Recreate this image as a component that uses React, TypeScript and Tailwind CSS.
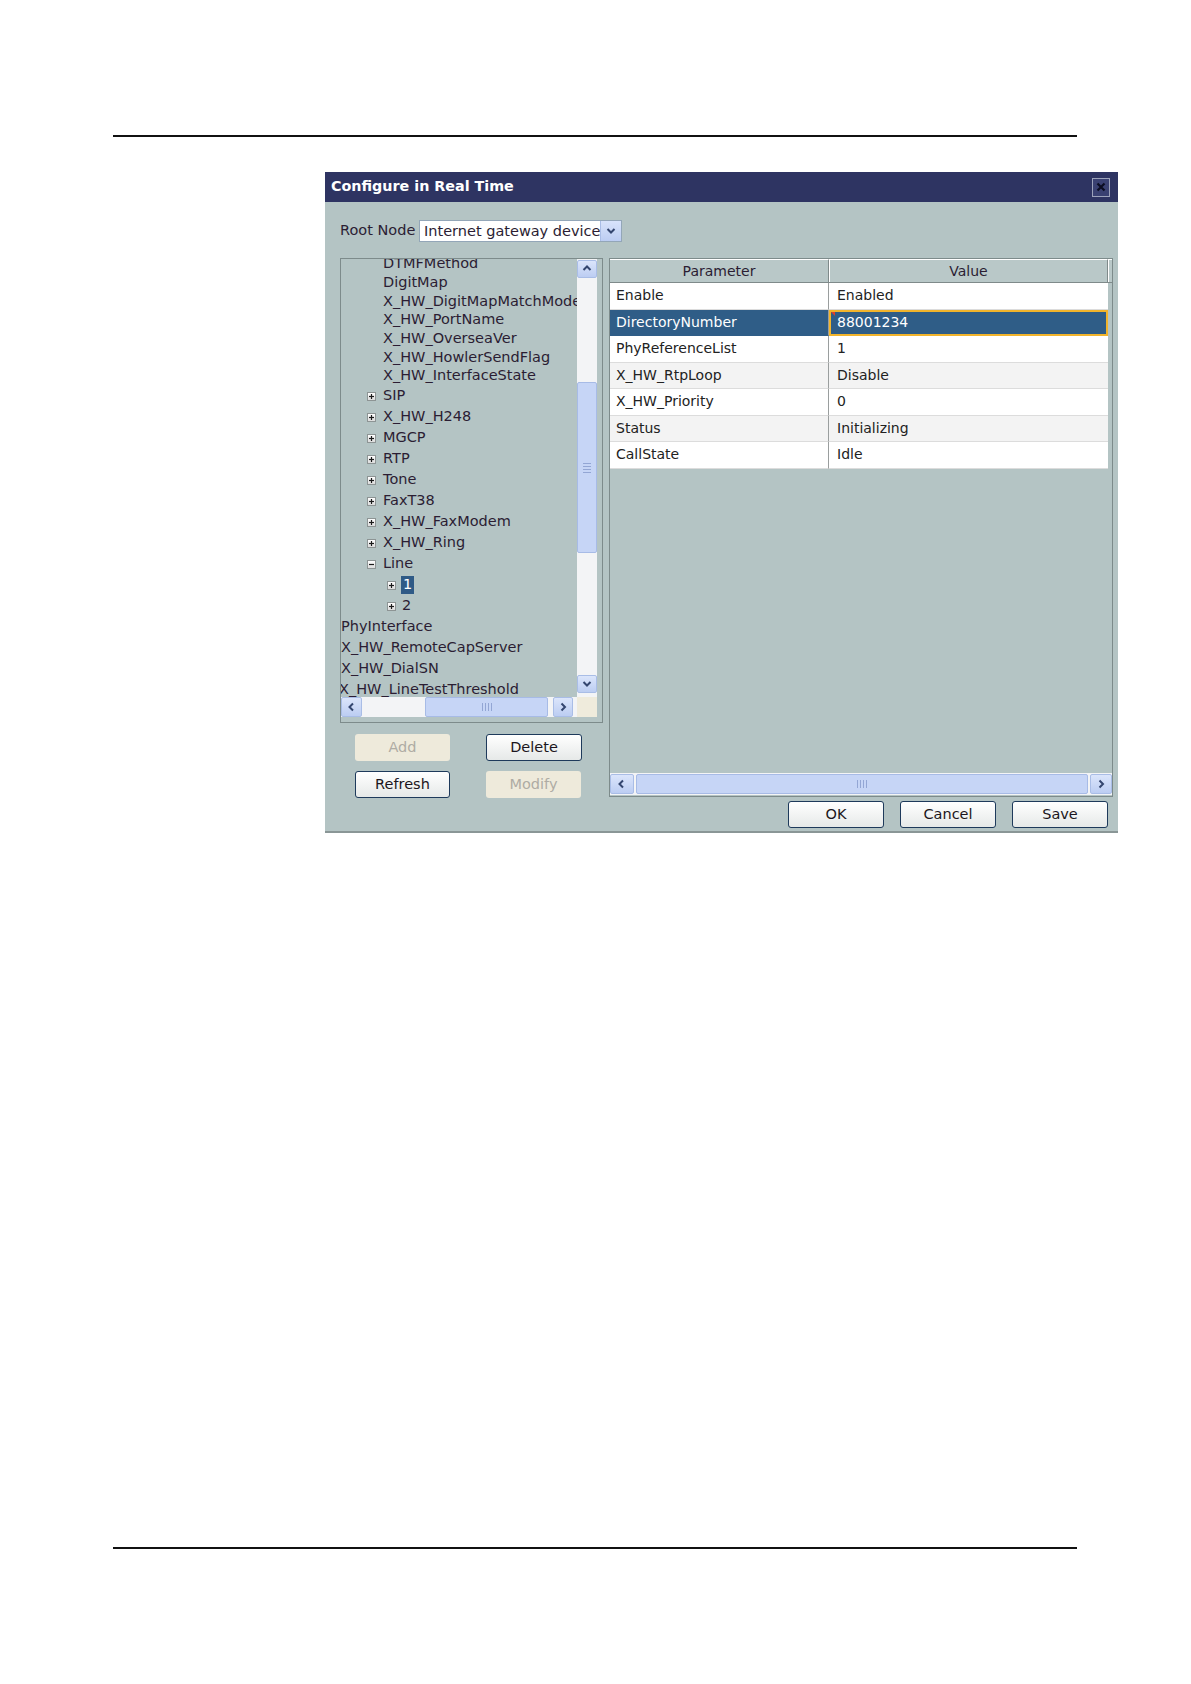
const treeText = 'text-[#2b1d33]'

type Row = { param: string; value: string; shade?: boolean; selected?: boolean }

const rows: Row[] = [
  { param: 'Enable', value: 'Enabled' },
  { param: 'DirectoryNumber', value: '88001234', selected: true },
  { param: 'PhyReferenceList', value: '1' },
  { param: 'X_HW_RtpLoop', value: 'Disable', shade: true },
  { param: 'X_HW_Priority', value: '0' },
  { param: 'Status', value: 'Initializing', shade: true },
  { param: 'CallState', value: 'Idle' },
]

const leaves = [
  'DTMFMethod',
  'DigitMap',
  'X_HW_DigitMapMatchMode',
  'X_HW_PortName',
  'X_HW_OverseaVer',
  'X_HW_HowlerSendFlag',
  'X_HW_InterfaceState',
]

const branches = ['SIP', 'X_HW_H248', 'MGCP', 'RTP', 'Tone', 'FaxT38', 'X_HW_FaxModem', 'X_HW_Ring']

const topLevel = ['PhyInterface', 'X_HW_RemoteCapServer', 'X_HW_DialSN', 'X_HW_LineTestThreshold']

function Chevron({ dir }: { dir: 'up' | 'down' | 'left' | 'right' }) {
  const d = {
    up: 'M1.5 6 L5 2.5 L8.5 6',
    down: 'M1.5 3 L5 6.5 L8.5 3',
    left: 'M6 1.5 L2.5 5 L6 8.5',
    right: 'M3.5 1.5 L7 5 L3.5 8.5',
  }[dir]
  return (
    <svg width="10" height="10" viewBox="0 0 10 10">
      <path d={d} stroke="#34466f" strokeWidth="2" fill="none" />
    </svg>
  )
}

function ArrowButton({ dir, className }: { dir: 'up' | 'down' | 'left' | 'right'; className: string }) {
  return (
    <div
      className={`flex items-center justify-center rounded-[2px] border border-[#a9bde6] bg-gradient-to-b from-[#dbe5fb] to-[#bccdf2] ${className}`}
    >
      <Chevron dir={dir} />
    </div>
  )
}

function Grip({ vertical }: { vertical?: boolean }) {
  const line = vertical ? 'h-px w-[8px] bg-[#93a6d4]' : 'h-[8px] w-px bg-[#93a6d4]'
  return (
    <div className={`flex gap-[2px] ${vertical ? 'flex-col' : ''}`}>
      <span className={line} />
      <span className={line} />
      <span className={line} />
      <span className={line} />
    </div>
  )
}

function Expander({ open }: { open?: boolean }) {
  return (
    <span className="flex h-[9px] w-[9px] items-center justify-center border border-[#8d9494] bg-gradient-to-b from-white to-[#dcdcdc]">
      <svg width="7" height="7" viewBox="0 0 7 7">
        <path d="M1 3.5 H6" stroke="#1b1b1b" strokeWidth="1.2" />
        {open ? null : <path d="M3.5 1 V6" stroke="#1b1b1b" strokeWidth="1.2" />}
      </svg>
    </span>
  )
}

function DialogButton({ label, disabled, w }: { label: string; disabled?: boolean; w: string }) {
  return disabled ? (
    <div
      className={`flex h-[27px] ${w} items-center justify-center rounded-[3px] bg-[#eeeadb] text-[14.5px] text-[#aeaca4]`}
    >
      {label}
    </div>
  ) : (
    <div
      className={`flex h-[27px] ${w} items-center justify-center rounded-[3px] border border-[#1e3a5b] bg-gradient-to-b from-white to-[#e6e9e8] text-[14.5px] text-[#1c1620]`}
    >
      {label}
    </div>
  )
}

function Tree() {
  return (
    <div className={`-mt-[4px] text-[14.5px] ${treeText}`}>
      {leaves.map((name) => (
        <div key={name} className="relative flex h-[18.67px] items-center whitespace-nowrap">
          <span className="absolute left-[42px]">{name}</span>
        </div>
      ))}
      {branches.map((name) => (
        <div key={name} className="relative flex h-[21px] items-center whitespace-nowrap">
          <span className="absolute left-[26px]">
            <Expander />
          </span>
          <span className="absolute left-[42px]">{name}</span>
        </div>
      ))}
      <div className="relative flex h-[21px] items-center whitespace-nowrap">
        <span className="absolute left-[26px]">
          <Expander open />
        </span>
        <span className="absolute left-[42px]">Line</span>
      </div>
      <div className="relative flex h-[21px] items-center whitespace-nowrap">
        <span className="absolute left-[46px]">
          <Expander />
        </span>
        <span className="absolute left-[60px] flex h-[18px] w-[13px] items-center justify-center bg-[#2f5a86] text-white">
          1
        </span>
      </div>
      <div className="relative flex h-[21px] items-center whitespace-nowrap">
        <span className="absolute left-[46px]">
          <Expander />
        </span>
        <span className="absolute left-[61px]">2</span>
      </div>
      {topLevel.map((name, i) => (
        <div key={name} className="relative flex h-[21px] items-center whitespace-nowrap">
          <span className={`absolute ${i === 3 ? '-left-[2px]' : 'left-0'}`}>{name}</span>
        </div>
      ))}
    </div>
  )
}

export default function App() {
  return (
    <div className="h-[1684px] w-[1191px] bg-white font-['DejaVu_Sans',sans-serif]">
      <div className="pt-[135px]">
        <div className="ml-[113px] h-[2px] w-[964px] bg-[#111]" />

        {/* dialog */}
        <div className="ml-[325px] mt-[35px] flex h-[661px] w-[793px] flex-col border-b-2 border-[#8a9696] bg-[#b4c4c4]">
          <div className="flex h-[30px] shrink-0 items-center justify-between bg-[#2e3462] pl-[6px] pr-[8px]">
            <span className="text-[14.3px] font-bold text-white">Configure in Real Time</span>
            <span className="flex h-[19px] w-[18px] items-center justify-center border border-[#9da3bb] bg-[#3a4172]">
              <svg width="10" height="10" viewBox="0 0 10 10">
                <path d="M1.5 1.5 L8.5 8.5 M8.5 1.5 L1.5 8.5" stroke="#0b0d22" strokeWidth="2.2" />
              </svg>
            </span>
          </div>

          <div className="pl-[15px] pr-px">
            {/* root node */}
            <div className="mt-[18px] flex h-[22px] items-center">
              <span className="w-[79px] text-[14.5px] text-[#2b1d33]">Root Node</span>
              <div className="flex h-[22px] w-[203px] border border-[#93a6b8] bg-white">
                <span className="min-w-0 flex-1 overflow-hidden whitespace-nowrap pl-[4px] text-[14.5px] leading-[20px] text-[#2b1d33]">
                  Internet gateway device
                </span>
                <span className="flex w-[21px] shrink-0 items-center justify-center border-l border-[#a9bde6] bg-gradient-to-b from-[#d8e3fb] to-[#bccdf2]">
                  <Chevron dir="down" />
                </span>
              </div>
            </div>

            <div className="mt-[16px] flex gap-[6px]">
              {/* left column */}
              <div className="w-[263px] shrink-0">
                <div className="h-[465px] border border-[#7d8b8b] pb-[5px] pr-[5px]">
                  <div className="flex h-full flex-col">
                    <div className="flex min-h-0 flex-1">
                      <div className="relative flex-1 overflow-hidden">
                        <Tree />
                      </div>
                      <div className="flex w-[20px] flex-col bg-[#f3f4f6] pt-px">
                        <ArrowButton dir="up" className="h-[18px]" />
                        <div className="h-[104px]" />
                        <div className="flex h-[171px] items-center justify-center rounded-[2px] border border-[#a7bbe6] bg-[#c6d5f6]">
                          <Grip vertical />
                        </div>
                        <div className="flex-1" />
                        <ArrowButton dir="down" className="mb-[4px] h-[18px]" />
                      </div>
                    </div>
                    <div className="flex h-[20px]">
                      <div className="flex flex-1 bg-[#f3f4f6] pr-[4px]">
                        <ArrowButton dir="left" className="w-[21px]" />
                        <div className="w-[63px]" />
                        <div className="flex w-[123px] items-center justify-center rounded-[2px] border border-[#a7bbe6] bg-[#c6d5f6]">
                          <Grip />
                        </div>
                        <div className="flex-1" />
                        <ArrowButton dir="right" className="w-[20px]" />
                      </div>
                      <div className="w-[20px] bg-[#efebdc]" />
                    </div>
                  </div>
                </div>

                <div className="mt-[11px] grid grid-cols-[131px_96px] gap-y-[10px] pl-[15px]">
                  <DialogButton label="Add" disabled w="w-[95px]" />
                  <DialogButton label="Delete" w="w-[96px]" />
                  <DialogButton label="Refresh" w="w-[95px]" />
                  <DialogButton label="Modify" disabled w="w-[95px]" />
                </div>
              </div>

              {/* right column */}
              <div className="w-[504px] shrink-0">
                <div className="flex h-[539px] flex-col border border-[#7d8b8b]">
                  <div className="flex-1">
                    <div className="flex h-[24px] border-b border-[#7f8a8a] bg-[#b9c8c8] text-[14px] text-[#2b1d33]">
                      <div className="flex w-[219px] items-center justify-center border-r border-t border-r-[#7f8a8a] border-t-white">
                        Parameter
                      </div>
                      <div className="flex w-[279px] items-center justify-center border-l border-r border-t border-l-white border-r-[#7f8a8a] border-t-white">
                        Value
                      </div>
                      <div className="flex-1 border-l border-t border-white" />
                    </div>
                    {rows.map((r) => (
                      <div key={r.param} className="flex h-[26.5px] text-[14px]">
                        <div
                          className={`flex w-[219px] items-center border-b border-r border-r-[#9a9e9e] pl-[6px] ${
                            r.selected
                              ? 'border-b-[#2f5d87] bg-[#2f5d87] text-white'
                              : `border-b-[#dcdcdc] text-[#222] ${r.shade ? 'bg-[#f3f3f3]' : 'bg-white'}`
                          }`}
                        >
                          {r.param}
                        </div>
                        <div
                          className={`relative flex w-[279px] items-center ${
                            r.selected
                              ? 'border-2 border-[#f1b42c] bg-[#2f5d87] pl-[6px] text-white'
                              : `border-b border-[#dcdcdc] pl-[8px] text-[#222] ${r.shade ? 'bg-[#f3f3f3]' : 'bg-white'}`
                          }`}
                        >
                          {r.selected ? (
                            <span className="absolute left-0 top-0 h-0 w-0 border-l-[4px] border-t-[4px] border-l-transparent border-t-[#e0402a]" />
                          ) : null}
                          {r.value}
                        </div>
                      </div>
                    ))}
                  </div>
                  <div className="mb-px flex h-[22px] bg-[#f3f4f6] py-px">
                    <ArrowButton dir="left" className="w-[24px]" />
                    <div className="ml-[2px] flex w-[452px] items-center justify-center rounded-[2px] border border-[#a7bbe6] bg-[#c6d5f6]">
                      <Grip />
                    </div>
                    <div className="flex-1" />
                    <ArrowButton dir="right" className="w-[22px]" />
                  </div>
                </div>

                <div className="mt-[4px] flex justify-end gap-[16px] pr-[5px]">
                  <DialogButton label="OK" w="w-[96px]" />
                  <DialogButton label="Cancel" w="w-[96px]" />
                  <DialogButton label="Save" w="w-[96px]" />
                </div>
              </div>
            </div>
          </div>
        </div>

        <div className="ml-[113px] mt-[714px] h-[2px] w-[964px] bg-[#111]" />
      </div>
    </div>
  )
}
